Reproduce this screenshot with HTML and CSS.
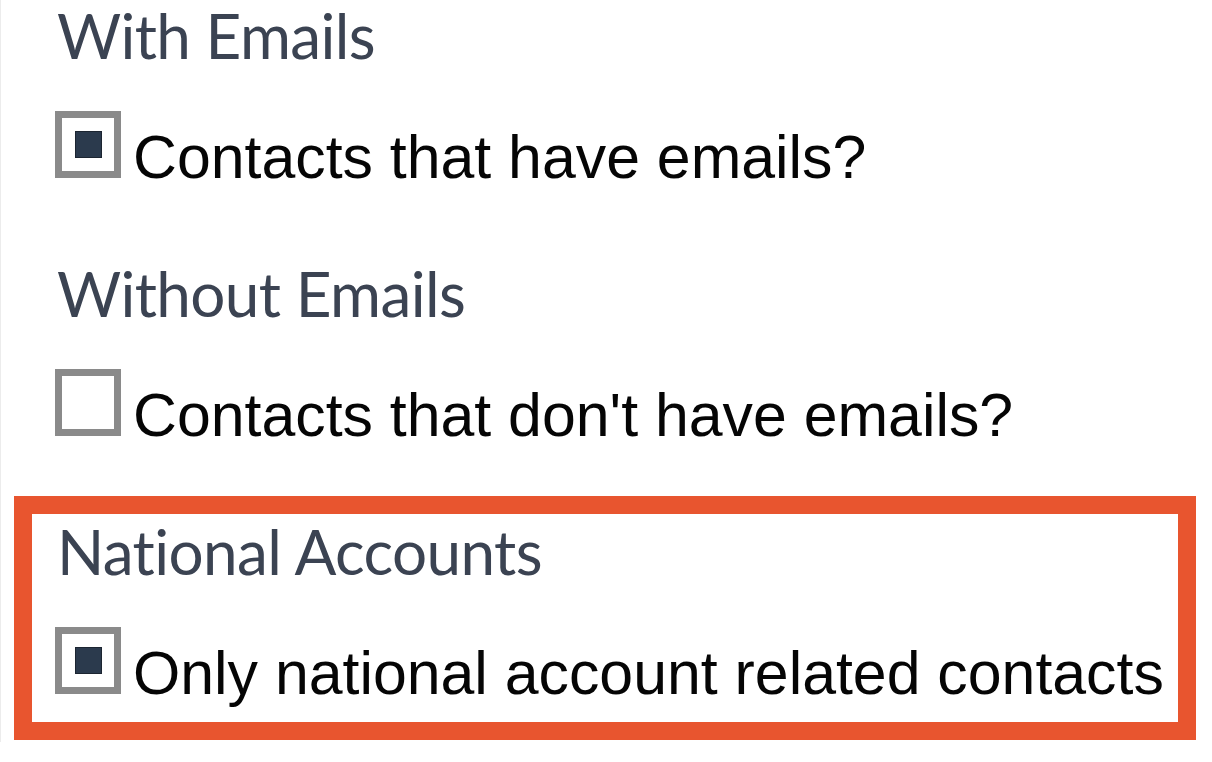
FILE: index.html
```html
<!DOCTYPE html>
<html lang="en">
<head>
<meta charset="utf-8">
<title>Contact filters</title>
<link rel="stylesheet" href="styles.css">
</head>
<body>
<div class="panel">
  <div class="group">
    <h3 class="group-title">With Emails</h3>
    <label class="row">
      <span class="box checked"><span class="mark"></span></span>
      <span class="label-text">Contacts that have emails?</span>
    </label>
  </div>
  <div class="group">
    <h3 class="group-title">Without Emails</h3>
    <label class="row">
      <span class="box"></span>
      <span class="label-text">Contacts that don't have emails?</span>
    </label>
  </div>
  <div class="group highlight">
    <h3 class="group-title">National Accounts</h3>
    <label class="row">
      <span class="box checked"><span class="mark"></span></span>
      <span class="label-text">Only national account related contacts</span>
    </label>
  </div>
</div>
</body>
</html>
```
FILE: styles.css
```css
* { box-sizing: border-box; }
html, body { margin: 0; padding: 0; background: #ffffff; }
body { width: 1212px; height: 762px; overflow: hidden; }

.panel {
  height: 762px;
  border-left: 1px solid #ececec;
  padding: 0 16px 0 13px;
  display: flex;
  flex-direction: column;
  gap: 14px;
  margin-top: -20px;
}

.group {
  border: 18px solid transparent;
  padding: 5px 16px 17px 23px;
}
.group.highlight { border-color: #e8552f; }

.group-title {
  margin: 0;
  padding-left: 2px;
  font-family: Lato, "Open Sans", sans-serif;
  font-weight: 400;
  font-size: 62px;
  letter-spacing: -0.6px;
  line-height: 64px;
  color: #3b4352;
}

.row {
  margin-top: 44px;
  display: flex;
  align-items: baseline;
  gap: 12px;
}

.box {
  flex: none;
  display: block;
  width: 66px;
  height: 67px;
  border: 7px solid #8a8a8a;
  background: #ffffff;
}
.mark {
  display: block;
  width: 27px;
  height: 27px;
  margin: 13px auto 0;
  background: #2b3a4d;
  border: 1px solid #1c2531;
}

.label-text {
  font-family: "Liberation Sans", Arial, sans-serif;
  font-size: 60.8px;
  line-height: 64px;
  color: #050505;
  white-space: nowrap;
}
```
